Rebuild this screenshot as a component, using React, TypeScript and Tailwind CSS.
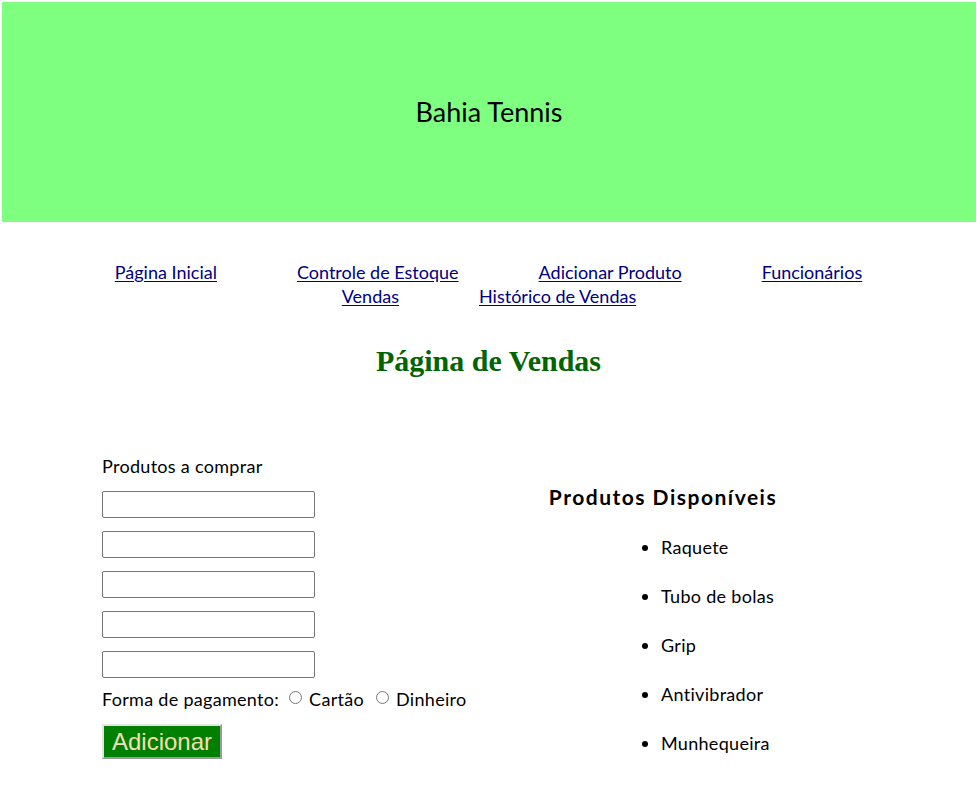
import React from "react";

const gill = { fontFamily: '"Gill Sans", "Gill Sans MT", Lato, "Open Sans", sans-serif' };

export default function App() {
  const links1 = ["Página Inicial", "Controle de Estoque", "Adicionar Produto", "Funcionários"];
  const links2 = ["Vendas", "Histórico de Vendas"];
  const produtos = ["Raquete", "Tubo de bolas", "Grip", "Antivibrador", "Munhequeira"];
  return (
    <div className="bg-white text-black min-h-[791px]" style={gill}>
      <div className="pt-[2px] pl-[2px] pr-[1px]">
        <header className="h-[220px] bg-[#7fff7f] flex items-center justify-center">
          <span className="text-[27px] text-black">Bahia Tennis</span>
        </header>
      </div>
      <nav className="pt-[38px] flex flex-col items-center text-[18px] leading-[24px]">
        <div className="flex gap-[80px]">
          {links1.map((l) => (
            <a key={l} href="#" className="text-[#000080] underline underline-offset-[2px]">{l}</a>
          ))}
        </div>
        <div className="flex gap-[80px] pl-[1px]">
          {links2.map((l) => (
            <a key={l} href="#" className="text-[#000080] underline underline-offset-[2px]">{l}</a>
          ))}
        </div>
      </nav>
      <h1
        className="mt-[36px] text-center text-[30px] leading-[34px] font-bold text-[#006400]"
        style={{ fontFamily: '"Liberation Serif", "Times New Roman", serif' }}
      >
        Página de Vendas
      </h1>
      <div className="flex mt-[76px]">
        <div className="w-[446px] shrink-0 pl-[102px] text-[18px] tracking-[0.3px]">
          <div className="leading-[24px] h-[24px]">Produtos a comprar</div>
          <div className="flex flex-col gap-[13px] mt-[13px]">
            {[0, 1, 2, 3, 4].map((i) => (
              <input key={i} type="text" className="w-[213px] h-[27px] border border-[#767676] rounded-[2px] bg-white" />
            ))}
          </div>
          <div className="mt-[9px] flex items-center leading-[24px] whitespace-nowrap">
            <span className="shrink-0">Forma de pagamento:</span>
            <input type="radio" name="pg" className="shrink-0 ml-[10px] mr-[7px] w-[13px] h-[13px] -translate-y-[2px]" />
            <span className="shrink-0">Cartão</span>
            <input type="radio" name="pg" className="shrink-0 ml-[12px] mr-[7px] w-[13px] h-[13px] -translate-y-[2px]" />
            <span className="shrink-0">Dinheiro</span>
          </div>
          <button
            className="mt-[13px] w-[120px] h-[35px] bg-[#008000] text-[#f5deb3] text-[24px] tracking-normal border-[2px] border-solid border-t-[#e5e5e5] border-l-[#e5e5e5] border-r-[#9a9a9a] border-b-[#9a9a9a] flex items-center justify-center"
            style={{ fontFamily: '"Liberation Sans", Arial, sans-serif' }}
          >
            Adicionar
          </button>
        </div>
        <div className="w-[434px] flex flex-col items-center pt-[30px]">
          <h2 className="text-[21px] tracking-[1.5px] font-bold leading-[26px]">Produtos Disponíveis</h2>
          <ul className="list-disc self-start ml-[215px] pl-0 mt-[25px] text-[18px] tracking-[0.3px] leading-[24px] flex flex-col gap-[25px]">
            {produtos.map((p) => (
              <li key={p} className="w-[160px]">{p}</li>
            ))}
          </ul>
        </div>
      </div>
    </div>
  );
}
